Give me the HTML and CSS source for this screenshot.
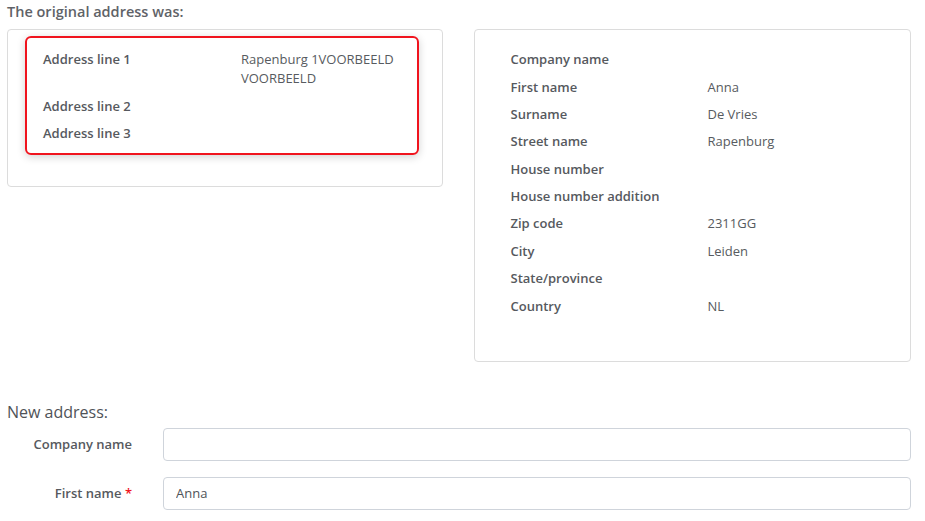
FILE: index.html
```html
<!DOCTYPE html>
<html lang="en">
<head>
  <meta charset="UTF-8" />
  <meta name="viewport" content="width=device-width, initial-scale=1.0" />
  <title>Address check</title>
  <link rel="stylesheet" href="styles.css">
</head>
<body>
  <div class="page">
    <h2 class="section-title">The original address was:</h2>
    <div class="cards">
      <div class="card card-left">
        <div class="highlight">
          <table class="address-table">
            <tr><th>Address line 1</th><td>Rapenburg 1VOORBEELD VOORBEELD</td></tr>
            <tr><th>Address line 2</th><td></td></tr>
            <tr><th>Address line 3</th><td></td></tr>
          </table>
        </div>
      </div>
      <div class="card card-right">
        <table class="address-table">
          <tr><th>Company name</th><td></td></tr>
          <tr><th>First name</th><td>Anna</td></tr>
          <tr><th>Surname</th><td>De Vries</td></tr>
          <tr><th>Street name</th><td>Rapenburg</td></tr>
          <tr><th>House number</th><td></td></tr>
          <tr><th>House number addition</th><td></td></tr>
          <tr><th>Zip code</th><td>2311GG</td></tr>
          <tr><th>City</th><td>Leiden</td></tr>
          <tr><th>State/province</th><td></td></tr>
          <tr><th>Country</th><td>NL</td></tr>
        </table>
      </div>
    </div>

    <h3 class="form-title">New address:</h3>
    <form class="address-form">
      <div class="form-row">
        <label for="company">Company name</label>
        <input type="text" id="company" value="" />
      </div>
      <div class="form-row">
        <label for="firstname">First name <span class="required">*</span></label>
        <input type="text" id="firstname" value="Anna" />
      </div>
    </form>
  </div>
</body>
</html>
```

FILE: styles.css
```css
* {
  box-sizing: border-box;
  margin: 0;
  padding: 0;
}

body {
  font-family: 'Open Sans', sans-serif;
  font-size: 13px;
  color: #555a60;
  background: #fff;
}

.page {
  width: 904px;
  margin-left: 7px;
}

.section-title {
  font-size: 14.5px;
  font-weight: 600;
  color: #5f6368;
  line-height: 20px;
  padding-top: 2px;
  margin-bottom: 7px;
}

.cards {
  display: flex;
  gap: 31px;
  align-items: flex-start;
}

.card {
  width: 437px;
  border: 1px solid #dcdcdc;
  border-radius: 4px;
  background: #fff;
}

.card-left {
  padding: 6px 23px 31px 17px;
}

.card-right {
  padding: 16px 35px 41px 35px;
}

.highlight {
  border: 2px solid #f0141e;
  border-radius: 6px;
  padding: 8px 16px 6px 16px;
  box-shadow: 0 2px 8px rgba(0, 0, 0, 0.18);
}

.address-table {
  border-collapse: collapse;
  width: 100%;
}

.address-table th,
.address-table td {
  text-align: left;
  vertical-align: top;
  line-height: 19px;
  padding: 4.2px 0;
}

.address-table th {
  width: 198px;
  font-weight: 600;
  color: #56595e;
}

.address-table td {
  font-weight: 400;
  color: #575b60;
}

.card-right .address-table th {
  width: 197px;
}

.form-title {
  font-size: 16px;
  font-weight: 400;
  color: #4f5358;
  line-height: 22px;
  margin-top: 39px;
  margin-bottom: 5px;
}

.address-form {
  display: flex;
  flex-direction: column;
  gap: 16px;
}

.form-row {
  display: flex;
  align-items: center;
  gap: 31px;
}

.form-row label {
  width: 125px;
  text-align: right;
  font-weight: 600;
  color: #56595e;
}

.required {
  color: #f0141e;
}

.form-row input {
  flex: 1;
  height: 33px;
  border: 1px solid #cfd4db;
  border-radius: 4px;
  padding: 0 12px;
  font-family: 'Open Sans', sans-serif;
  font-size: 13px;
  color: #4f5358;
  background: #fff;
  outline: none;
}
```
